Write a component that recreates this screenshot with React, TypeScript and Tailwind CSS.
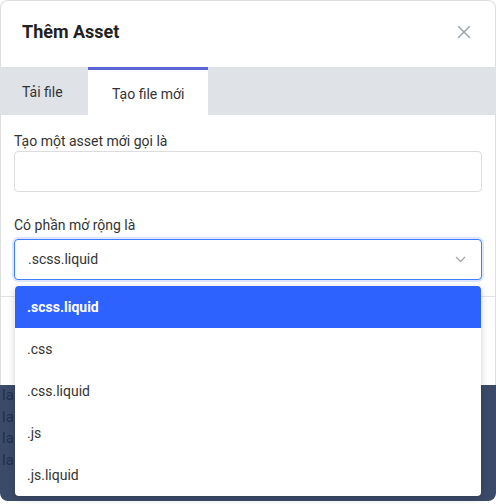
import * as React from "react";

const options = [".scss.liquid", ".css", ".css.liquid", ".js", ".js.liquid"];

export default function App() {
  const selected = ".scss.liquid";

  return (
    <div className="relative h-[504px] w-[496px] overflow-hidden bg-white font-['Roboto',sans-serif] text-[#333]">
      <div className="relative z-10 rounded-t-lg border border-b-0 border-[#dedede] bg-white">
        {/* header */}
        <div className="flex h-[66px] items-center justify-between pb-[5px] pl-[21px] pr-[24px]">
          <h2 className="text-[18px] font-bold text-[#222]">Thêm Asset</h2>
          <svg width="14" height="14" viewBox="0 0 14 14" className="text-[#9ba5b0]">
            <path d="M1.5 1.5l11 11M12.5 1.5l-11 11" stroke="currentColor" strokeWidth="1.5" strokeLinecap="round" />
          </svg>
        </div>

        {/* tabs */}
        <div className="-mx-px flex h-[48px] bg-[#dfe2e6]">
          <div className="flex w-[88px] items-center pl-[22px] pt-[3px] text-[14px] text-[#333]">Tải file</div>
          <div className="flex w-[120px] items-center border-t-[3px] border-[#5965d4] bg-white pl-[24px] pt-[3px] text-[14px] text-[#333]">
            Tạo file mới
          </div>
        </div>

        {/* body */}
        <div className="px-[13px] pt-[16px]">
          <label className="block text-[14px] leading-5 text-[#333]">Tạo một asset mới gọi là</label>
          <div className="h-[41px] rounded-[4px] border border-[#dcdcdc] bg-white" />

          <label className="mt-[23px] block text-[14px] leading-5 text-[#333]">Có phần mở rộng là</label>
          <div className="mt-[4px] flex h-[41px] items-center justify-between rounded-[4px] border border-[#3d7bff] bg-white pl-[13px] pr-[15px] shadow-[0_0_0_2px_rgba(61,123,255,0.18)]">
            <span className="text-[14px] text-[#333]">{selected}</span>
            <svg width="11" height="7" viewBox="0 0 11 7" className="text-[#a6a6a6]">
              <path d="M1 1l4.5 4.5L10 1" stroke="currentColor" strokeWidth="1.3" fill="none" />
            </svg>
          </div>
        </div>

        {/* footer */}
        <div className="mt-[16px] h-[89px] border-t border-[#e3e3e3]" />
      </div>

      {/* page behind the modal */}
      <div className="h-[116px] overflow-hidden rounded-b-lg bg-[#3b4a69] pl-[2px]">
        {[0, 1, 2, 3].map((i) => (
          <div key={i} className="text-[15px] leading-[21.5px] text-[#23314d]">
            la
          </div>
        ))}
      </div>

      {/* dropdown menu */}
      <ul className="absolute left-[15px] top-[286px] z-20 w-[466px] overflow-hidden rounded-[4px] bg-white shadow-[0_2px_8px_rgba(0,0,0,0.18)]">
        {options.map((o) => (
          <li
            key={o}
            className={
              o === selected
                ? "flex h-[42px] items-center bg-[#2d62ff] pl-[12px] text-[14px] font-bold text-white"
                : "flex h-[42px] items-center pl-[12px] text-[14px] text-[#333]"
            }
          >
            {o}
          </li>
        ))}
      </ul>
    </div>
  );
}
